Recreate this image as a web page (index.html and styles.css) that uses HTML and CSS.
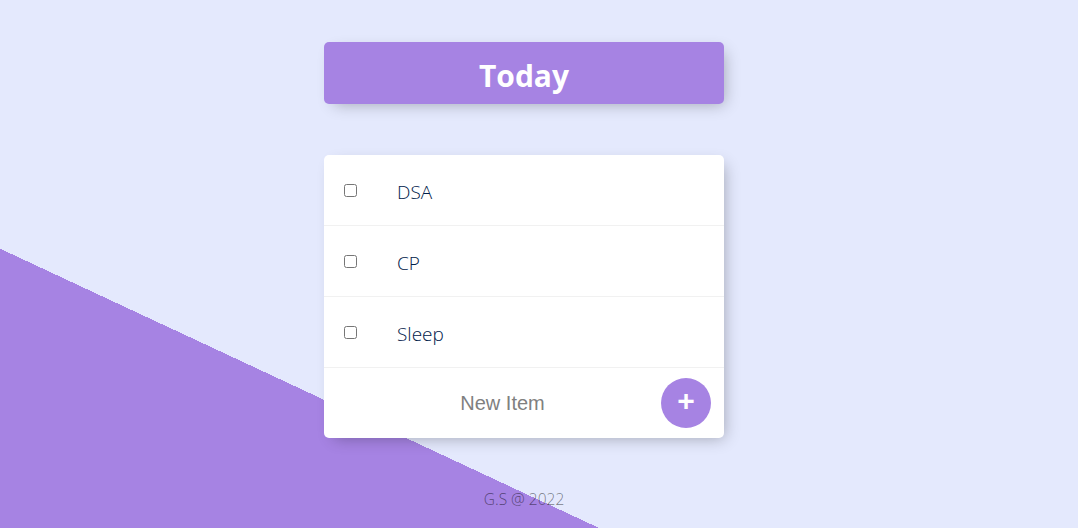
FILE: index.html
```html
<!DOCTYPE html>
<html lang="en">
<head>
<meta charset="utf-8">
<title>To-Do List</title>
<link rel="stylesheet" href="styles.css">
</head>
<body>
  <div class="box heading">
    <h1>Today</h1>
  </div>
  <div class="box list">
    <div class="item"><input type="checkbox"><p>DSA</p></div>
    <div class="item"><input type="checkbox"><p>CP</p></div>
    <div class="item"><input type="checkbox"><p>Sleep</p></div>
    <form class="item add-form">
      <input type="text" class="new-item" placeholder="New Item" autocomplete="off">
      <button type="button" class="add-btn">+</button>
    </form>
  </div>
  <footer class="footer">G.S @ 2022</footer>
</body>
</html>
```

FILE: styles.css
```css
html {
  background-color: #E4E9FD;
  background-image: linear-gradient(25deg, #A683E3 50%, #E4E9FD 50%);
  background-size: 100% 1000px;
  background-repeat: no-repeat;
  height: 100%;
  overflow: hidden;
  font-family: "Open Sans", "Noto Sans", sans-serif;
}

body {
  margin: 0;
  padding: 42px 30px 0 0;
}

.box {
  width: 400px;
  margin: 0 auto 51px;
  background: #fff;
  border-radius: 5px;
  box-shadow: 5px 5px 15px -5px rgba(0, 0, 0, 0.3);
}

.heading {
  background-color: #A683E3;
  text-align: center;
}

.heading h1 {
  margin: 0;
  padding: 14px 10px 8px;
  height: 40px;
  line-height: 40px;
  color: #fff;
  font-size: 30px;
  font-weight: 700;
}

.list {
  margin-bottom: 0;
}

.item {
  min-height: 70px;
  display: flex;
  align-items: center;
  border-bottom: 1px solid #F1F1F1;
}

.item:last-child {
  border-bottom: 0;
}

.item input[type="checkbox"] {
  margin: 20px;
  width: 13px;
  height: 13px;
}

.item p {
  margin: 0;
  padding: 22px 20px 18px;
  font-size: 19px;
  font-weight: 300;
  color: #00204a;
}

.add-form {
  margin: 0;
  padding-left: 22px;
  justify-content: flex-start;
}

.new-item {
  text-align: center;
  height: 60px;
  border: none;
  padding: 0;
  font-family: "Liberation Sans", Arial, sans-serif;
  font-size: 20px;
  width: 313px;
  outline: none;
}

.new-item::placeholder {
  color: grey;
  opacity: 1;
}

.add-btn {
  width: 50px;
  height: 50px;
  margin-left: 2px;
  border-radius: 50%;
  border: 0;
  padding: 0 0 5px;
  background-color: #A683E3;
  color: #fff;
  font-family: "Liberation Sans", Arial, sans-serif;
  font-size: 30px;
  font-weight: 700;
  line-height: 1;
}

.footer {
  margin-top: 50px;
  text-align: center;
  color: rgba(0, 0, 0, 0.5);
  font-size: 15.5px;
  font-weight: 300;
}
```
